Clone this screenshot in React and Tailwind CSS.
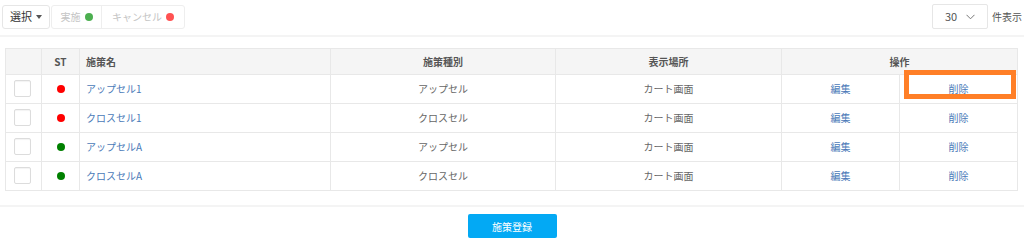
import React from "react";

const rows = [
  { st: "red", name: "アップセル1", type: "アップセル", place: "カート画面" },
  { st: "red", name: "クロスセル1", type: "クロスセル", place: "カート画面" },
  { st: "green", name: "アップセルA", type: "アップセル", place: "カート画面" },
  { st: "green", name: "クロスセルA", type: "クロスセル", place: "カート画面" },
];

const font = { fontFamily: '"Noto Sans CJK JP", "Noto Sans", sans-serif' };

export default function App() {
  return (
    <div className="w-[1024px] h-[246px] bg-white overflow-hidden text-[10px]" style={font}>
      {/* toolbar */}
      <div className="flex items-center justify-between h-[35px] pl-[2px] pr-[2px] pt-[3px] pb-[5px]">
        <div className="flex items-center h-[24px]">
          <button className="h-[24px] w-[48px] border border-[#e6e6e6] rounded-[3px] bg-white text-[#333] text-[11px] flex items-center justify-center gap-[4px]">
            選択
            <span className="w-0 h-0 border-l-[3px] border-r-[3px] border-t-[4px] border-l-transparent border-r-transparent border-t-[#555]"></span>
          </button>
          <div className="flex h-[24px] ml-[1px] border border-[#eeeeee] rounded-[3px]">
            <div className="w-[50px] flex items-center justify-center gap-[4px] text-[#c4c4c4] text-[10px] border-r border-[#eeeeee]">
              実施<span className="w-[8px] h-[8px] rounded-full bg-[#4caf50]"></span>
            </div>
            <div className="w-[82px] flex items-center justify-center gap-[4px] text-[#c4c4c4] text-[10px]">
              キャンセル<span className="w-[8px] h-[8px] rounded-full bg-[#ff5252]"></span>
            </div>
          </div>
        </div>
        <div className="flex items-center h-[24px]">
          <div className="h-[25px] w-[56px] border border-[#e6e6e6] rounded-[2px] flex items-center justify-center gap-[9px] text-[#555] text-[11px]">
            30
            <svg width="9" height="6" viewBox="0 0 9 6"><path d="M0.5 0.8 L4.5 4.8 L8.5 0.8" fill="none" stroke="#777" strokeWidth="1" /></svg>
          </div>
          <span className="ml-[4px] text-[#555] text-[10px]">件表示</span>
        </div>
      </div>
      <div className="h-[2px] bg-[#f4f4f4]"></div>

      {/* table */}
      <div className="px-[5px] mt-[11px]">
        <table className="w-[1012px] table-fixed border-collapse text-[10px]">
          <colgroup>
            <col className="w-[36px]" />
            <col className="w-[38px]" />
            <col className="w-[251px]" />
            <col className="w-[225px]" />
            <col className="w-[226px]" />
            <col className="w-[118px]" />
            <col className="w-[118px]" />
          </colgroup>
          <thead>
            <tr className="h-[26px] bg-[#f5f5f5] text-[#555]">
              <th className="border border-[#e8e8e8]"></th>
              <th className="border border-[#e8e8e8] font-bold">ST</th>
              <th className="border border-[#e8e8e8] text-left pl-[6px] font-bold">施策名</th>
              <th className="border border-[#e8e8e8] font-bold">施策種別</th>
              <th className="border border-[#e8e8e8] font-bold">表示場所</th>
              <th colSpan={2} className="border border-[#e8e8e8] font-bold">操作</th>
            </tr>
          </thead>
          <tbody>
            {rows.map((r, i) => (
              <tr key={i} className="h-[29px]">
                <td className="border border-[#e8e8e8] pt-0 pb-[1px]">
                  <div className="ml-[8px] w-[17px] h-[17px] border border-[#dcdcdc] rounded-[2px] bg-white shadow-[inset_0_1px_1px_rgba(0,0,0,0.05)]"></div>
                </td>
                <td className="border border-[#e8e8e8] pb-[1px]">
                  <div className={`mx-auto w-[8px] h-[8px] rounded-full ${r.st === "red" ? "bg-[#ff0000]" : "bg-[#008000]"}`}></div>
                </td>
                <td className="border border-[#e8e8e8] pl-[6px] pb-[1px] text-[#4a7ab8]">{r.name}</td>
                <td className="border border-[#e8e8e8] pb-[1px] text-center text-[#666]">{r.type}</td>
                <td className="border border-[#e8e8e8] pb-[1px] text-center text-[#666]">{r.place}</td>
                <td className="border border-[#e8e8e8] pb-[1px] text-center text-[#4a7ab8]">編集</td>
                <td className="border border-[#e8e8e8] pb-[1px] text-center text-[#4a7ab8] relative">
                  {i === 0 && (
                    <div className="absolute left-[4px] right-[1px] top-[-5px] bottom-[4px] border-[5px] border-[#ff7f27] pointer-events-none"></div>
                  )}
                  削除
                </td>
              </tr>
            ))}
          </tbody>
        </table>
      </div>

      <div className="mt-[14px] h-[2px] bg-[#f4f4f4]"></div>
      <div className="flex justify-center mt-[7px]">
        <button className="w-[89px] h-[24px] rounded-[2px] bg-[#03a9f4] text-white text-[10px]">施策登録</button>
      </div>
    </div>
  );
}
